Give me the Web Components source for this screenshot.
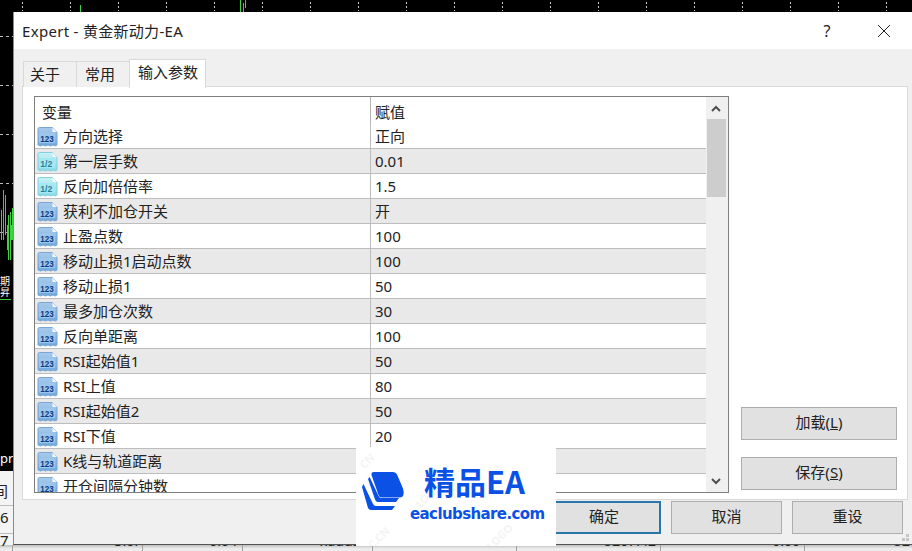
<!DOCTYPE html>
<html lang="zh"><head><meta charset="utf-8"><title>Expert</title>
<style>
html,body{margin:0;padding:0;width:912px;height:551px;overflow:hidden;background:#000}
body{font-family:"Noto Sans","Noto Sans CJK SC",sans-serif;color:#111}
</style></head><body>
<x-desktop>
<x-dialog heading="Expert - 黄金新动力-EA">
  <x-tabs slot="tabs"><x-tab style="width:54px;padding-left:6px">关于</x-tab><x-tab style="width:54px;padding-left:8px">常用</x-tab><x-tab active>输入参数</x-tab></x-tabs>
  <x-grid slot="grid">
    <x-row kind="n" name="方向选择" value="正向"></x-row>
    <x-row kind="f" alt name="第一层手数" value="0.01"></x-row>
    <x-row kind="f" name="反向加倍倍率" value="1.5"></x-row>
    <x-row kind="n" alt name="获利不加仓开关" value="开"></x-row>
    <x-row kind="n" name="止盈点数" value="100"></x-row>
    <x-row kind="n" alt name="移动止损1启动点数" value="100"></x-row>
    <x-row kind="n" name="移动止损1" value="50"></x-row>
    <x-row kind="n" alt name="最多加仓次数" value="30"></x-row>
    <x-row kind="n" name="反向单距离" value="100"></x-row>
    <x-row kind="n" alt name="RSI起始值1" value="50"></x-row>
    <x-row kind="n" name="RSI上值" value="80"></x-row>
    <x-row kind="n" alt name="RSI起始值2" value="50"></x-row>
    <x-row kind="n" name="RSI下值" value="20"></x-row>
    <x-row kind="n" alt name="K线与轨道距离" value=""></x-row>
    <x-row kind="n" name="开仓间隔分钟数" value=""></x-row>
  </x-grid>
  <x-btn slot="side">加载(<u>L</u>)</x-btn>
  <x-btn slot="side">保存(<u>S</u>)</x-btn>
  <x-btn slot="foot" primary>确定</x-btn>
  <x-btn slot="foot">取消</x-btn>
  <x-btn slot="foot">重设</x-btn>
</x-dialog>
<x-logo></x-logo>
</x-desktop>
<script>
const def=(n,html,cls={})=>{
  const t=document.createElement('template');t.innerHTML=html;
  customElements.define(n,class extends HTMLElement{
    constructor(){super();this.attachShadow({mode:'open'}).appendChild(t.content.cloneNode(true));}
    connectedCallback(){cls.init&&cls.init.call(this,this.shadowRoot);}
  });
};
const ticks=Array.from({length:19},(_,i)=>`<path d="M${22.5+48*i} 2v9" stroke="#c8c8c8" stroke-dasharray="2 2"/>`).join('');
const dashes=[36,85,134,183,232].map(y=>`<path d="M0 ${y}.5H13" stroke="#bbb" stroke-dasharray="3 3"/>`).join('');
const bot=[[138,'3.0l'],[237,'0.04'],[368,'xauusd'],[511,'1.2947.5'],[656,'5207.42'],[800,'0.00'],[926,'5207']]
 .map(([r,t])=>`<div class="bot" style="right:${912-r}px">${t}</div>`).join('');
const vs=[12,142,242,372,516,660,804].map(x=>`<div class="v" style="left:${x}px"></div>`).join('');
def('x-desktop',`<style>
:host{display:block;position:relative;width:912px;height:551px;background:#000;overflow:hidden}
svg{position:absolute;left:0;top:0}
.label{position:absolute;left:0;top:275px;width:13px;font:10px/11px "Noto Sans CJK SC",sans-serif;color:#fff;overflow:hidden;white-space:nowrap}
.pr{position:absolute;left:0;top:449px;font:13px/18px "Noto Sans",sans-serif;color:#fff}
.table{position:absolute;left:0;top:471px;width:100%;height:80px;background:#f4f4f4;color:#222;font:15px/20px "Noto Sans","Noto Sans CJK SC",sans-serif;overflow:hidden}
.c{position:absolute;left:-7px}
.bot{position:absolute;top:63px;white-space:nowrap;font-size:14px;line-height:14px}
.shade{position:absolute;left:0;right:0;top:74px;height:6px;background:linear-gradient(#bdbdbd,#ececec 60%)}
.v{position:absolute;top:74px;width:1px;height:6px;background:#a0a0a0}
.h{position:absolute;left:0;width:13px;height:1px;background:#bdbdbd}
</style>
<svg width="912" height="302" fill="none">${ticks}${dashes}
<g stroke="#3fd13f" stroke-width="1">
<path d="M80.5 5v7M240.5 0v12M243.5 3v9M245.5 0v8"/>
<path d="M1.5 210v30M3.5 190v50M5.5 195v40M7.5 225v25M8.5 215v45M10.5 212v48M11.5 225v15M12.5 208v32"/>
<path d="M0 299.5H11"/>
</g></svg>
<div class="label">期<br>昇</div>
<div class="pr">pr</div>
<div class="table"><div class="shade"></div>
<div class="c" style="top:10px">间</div><div class="c" style="left:0;top:36px">6</div><div class="c" style="left:0;top:59px">7</div>
<div class="h" style="top:34px"></div><div class="h" style="top:62px"></div>
${bot}${vs}
</div><slot></slot>`);
def('x-dialog',`<style>
:host{display:flex;flex-direction:column;position:absolute;left:13px;top:12px;width:899px;height:533px;background:#f0f0f0;box-sizing:border-box;border-left:1px solid #8a8a8a;border-bottom:1px solid #555}
.title{flex:none;height:37px;background:#fff;display:flex;align-items:center;padding:0 0 0 8px;font:15px/20px "Noto Sans","Noto Sans CJK SC",sans-serif;color:#222}
.title .t{flex:1;letter-spacing:.3px}
.help{width:14px;margin-right:43px;text-align:center;font-size:16px}
.x{margin-right:21px;display:block}
.body{flex:1;min-height:0;padding:10px 4px 0 8px;display:flex;flex-direction:column}
.panel{flex:none;height:414px;background:#fff;border:1px solid #d9d9d9;box-sizing:border-box;padding:9px 10px 6px 11px;display:flex;gap:12px;margin-top:-1px}
.side{flex:none;display:flex;flex-direction:column;justify-content:flex-end;gap:17px;padding-bottom:3px;width:156px}
.foot{display:flex;justify-content:flex-end;gap:10px;padding:0 5px 0 0;margin-top:1px}
.grip{position:absolute;right:1px;bottom:1px}
</style>
<div class="title"><span class="t" id="t"></span><span class="help">?</span>
<svg class="x" width="14" height="14" fill="none" stroke="#222" stroke-width="1"><path d="M1 1l12 12M13 1L1 13"/></svg></div>
<div class="body"><slot name="tabs"></slot>
<div class="panel"><slot name="grid"></slot><div class="side"><slot name="side"></slot></div></div>
<div class="foot"><slot name="foot"></slot></div></div>
<svg class="grip" width="10" height="10" fill="#c4c4c4"><rect x="5" y="1" width="3" height="3"/><rect x="1" y="5" width="3" height="3"/><rect x="5" y="5" width="3" height="3"/></svg>`,
{init(r){r.getElementById('t').textContent=this.getAttribute('heading');}});
def('x-tabs',`<style>:host{display:flex;align-items:flex-end;height:28px;padding-left:2px;position:relative;z-index:1}</style><slot></slot>`);
def('x-tab',`<style>
:host{display:block;box-sizing:border-box;height:26px;font:15px/24px "Noto Sans CJK SC",sans-serif;color:#222;background:#f0f0f0;border:1px solid #d9d9d9;border-bottom:none;margin-left:-1px}
:host([active]){background:#fff;line-height:24px;padding:0 7px 0 8px;position:relative;margin-bottom:-1px;height:29px}
</style><slot></slot>`);
def('x-grid',`<style>
:host{display:flex;flex:none;width:695px;height:397px;box-sizing:border-box;border:1px solid #7e7e7e;background:#fff}
.main{flex:1;min-width:0;overflow:hidden}
.head{display:flex;height:27px;font:15px/29px "Noto Sans CJK SC",sans-serif;color:#222}
.head div:first-child{width:336px;padding-left:7px;box-sizing:border-box;border-right:1px solid #b4b4b4}
.head div:last-child{padding-left:4px;flex:1}
.bar{flex:none;width:22px;background:#f0f0f0;display:flex;flex-direction:column;align-items:center;box-sizing:border-box;padding-right:2px}
.up,.dn{flex:none;height:22px;display:flex;align-items:center;justify-content:center}
.thumb{flex:none;width:19px;height:78px;background:#cdcdcd}
.sp{flex:1}
</style>
<div class="main"><div class="head"><div>变量</div><div>赋值</div></div><slot></slot></div>
<div class="bar"><div class="up"><svg width="10" height="7" fill="none" stroke="#505050" stroke-width="2"><path d="M1 6l4-4 4 4"/></svg></div><div class="thumb"></div><div class="sp"></div><div class="dn"><svg width="10" height="7" fill="none" stroke="#505050" stroke-width="2"><path d="M1 1l4 4 4-4"/></svg></div></div>`);
def('x-row',`<style>
:host{display:flex;height:25px;box-sizing:border-box;border-bottom:1px solid #bdbdbd;font:15px/24px "Noto Sans","Noto Sans CJK SC",sans-serif;color:#222;background:#fff;white-space:nowrap}
:host([alt]){background:#e9e9e9}
.n{width:336px;box-sizing:border-box;display:flex;align-items:center;border-right:1px solid #bdbdbd}
.v{padding-left:4px;flex:1}
svg{flex:none;margin:0 5px 0 2px}
text{font:bold 9.5px "Liberation Sans",sans-serif}
</style><div class="n"><span id="i" style="display:flex"></span><span id="n"></span></div><div class="v" id="v"></div>`,
{init(r){
 const f=this.getAttribute('kind')==='f';
 const id=f?'gf':'gn';
 r.getElementById('i').innerHTML=`<svg width="21" height="21" viewBox="0 0 21 21">
<defs><linearGradient id="${id}" x1="0" y1="0" x2="0" y2="1">${f?'<stop offset="0" stop-color="#c9f1f6"/><stop offset="1" stop-color="#86dbe9"/>':'<stop offset="0" stop-color="#a9cbec"/><stop offset="1" stop-color="#6fa8dd"/>'}</linearGradient></defs>
<path d="M1 3Q1 1.500 2.500 1.500H15.500L20 6V19L18 20 16 19 13.500 20 11 19 8.500 20 6 19 3.500 20 1 19z" fill="url(#${id})" stroke="${f?'#83cfdf':'#7aa6d3'}"/>
<path d="M15.500 1.500V6H20z" fill="#fff" opacity=".9"/>
<rect x="2" y="7" width="16" height="10" rx="1.500" fill="${f?'#a5e8f1':'#9dc6ec'}"/>
<text x="3.200" y="15.500" textLength="${f?12:13.500}" lengthAdjust="spacingAndGlyphs" fill="${f?'#2a7f98':'#0f3a80'}">${f?'1/2':'123'}</text></svg>`;
 r.getElementById('n').textContent=this.getAttribute('name');
 r.getElementById('v').textContent=this.getAttribute('value');
}});
def('x-btn',`<style>
:host{display:flex;align-items:center;justify-content:center;box-sizing:border-box;flex:none;width:111px;height:33px;padding-bottom:3px;background:#e1e1e1;border:1px solid #adadad;font:15px/20px "Noto Sans","Noto Sans CJK SC",sans-serif;color:#222}
:host([slot=side]){width:156px}
:host([primary]){border:2px solid #2a76a8;padding-right:3px}
</style><slot></slot>`);
def('x-logo',`<style>
:host{display:block;position:absolute;left:356px;top:447px;width:200px;height:99px;background:#fff;overflow:hidden;color:#0b51e6}
svg{position:absolute;left:6px;top:24px}
.a{position:absolute;left:68px;top:14px;font:bold 31px/40px "Noto Sans CJK SC",sans-serif;white-space:nowrap}
.b{position:absolute;left:54px;top:57px;font:bold 15px/20px "DejaVu Sans",sans-serif;white-space:nowrap;letter-spacing:-.6px}
.w{position:absolute;font:bold 11px/12px "Noto Sans",sans-serif;color:#f4f4f4;transform:rotate(-45deg);white-space:nowrap}
</style>
<span class="w" style="left:3px;top:8px">CN</span><span class="w" style="left:58px;top:45px">LOG</span><span class="w" style="left:10px;top:85px">C.CN</span><span class="w" style="left:128px;top:84px">LOGO</span>
<svg width="44" height="44" fill="#0b51e6"><path d="M12 1h19q3 0 4 2.500l6 14q1 3 .5 6-.5 3-4 3H20q-2.500 0-3.500-2.500L9.500 4q-.5-3 2.500-3z"/><path d="M6 8l1.600-2 9 19q1 2 3 2H37l-3 4H16q-2 0-3-2.500z"/><path d="M0 16l1.500-3 9.500 20q1 2 3 2H33l-3 4H9q-2 0-3-2z"/></svg>
<div class="a">精品EA</div><div class="b">eaclubshare.com</div>`);
</script>
</body></html>
